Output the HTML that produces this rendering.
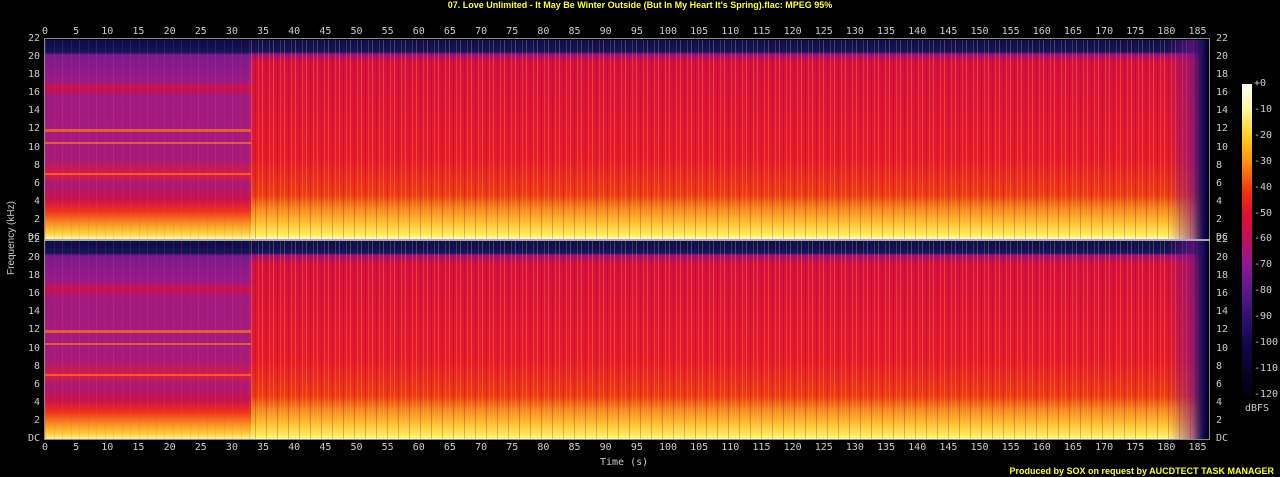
<!DOCTYPE html>
<html><head><style>
body{margin:0;width:1280px;height:477px;background:#000;overflow:hidden;position:relative;font-family:"DejaVu Sans Mono","Liberation Mono",monospace;color:#ccc;font-size:10px}
.t{position:absolute;white-space:nowrap}
.p{position:absolute;left:45px;width:1163px;height:199px;overflow:hidden}
.r{position:absolute;top:0;bottom:0;left:206px;right:0;background:linear-gradient(to bottom,#0c0c48 0,#141458 12px,#9a1080 14px,#d8103a 22px,#e81a28 60%,#f03a10 78%,#f8801a 84%,#ffc030 92%,#fff060 98%,#fffad0 100%)}
.l{position:absolute;top:0;bottom:0;left:0;width:206px;background:linear-gradient(to bottom,#0c0c48 0,#141458 12px,#7a1a8c 15px,#981a88 40px,#c01460 46px,#c8104a 50px,#a01a80 56px,#a81a7a 60%,#d81a40 68%,#a81a78 72%,#c81250 80%,#f0301c 86%,#f89020 92%,#ffd040 97%,#fff8a0 100%)}
.s{position:absolute;top:0;bottom:0;left:206px;right:0;background:repeating-linear-gradient(to right,rgba(255,200,120,.28) 0 1px,transparent 1px 4px,rgba(120,0,80,.25) 4px 5px,transparent 5px 7px,rgba(255,220,120,.2) 7px 8px,transparent 8px 11px)}
.s2{position:absolute;top:0;bottom:0;left:0;width:206px;background:repeating-linear-gradient(to right,rgba(255,80,120,.18) 0 1px,transparent 1px 9px,rgba(255,60,100,.15) 9px 10px,transparent 10px 17px)}
.e{position:absolute;top:0;bottom:0;right:0;width:40px;background:linear-gradient(to right,transparent,rgba(120,20,140,.6) 60%,#20105a 85%,#000030)}
.h{position:absolute;left:0;width:206px;height:3px;background:rgba(255,120,30,.7)}
</style></head><body>
<div class="t" style="left:0;width:1280px;top:0;text-align:center;color:#ffff30;font-family:'Liberation Sans',sans-serif;font-size:9px;font-weight:bold">07. Love Unlimited - It May Be Winter Outside (But In My Heart It's Spring).flac: MPEG 95%</div>
<div class="p" style="top:40px"><div class="l"></div><div class="s2"></div><div class="h" style="top:89px"></div><div class="h" style="top:102px;height:2px"></div><div class="h" style="top:133px;height:2px"></div><div class="r"></div><div class="s"></div><div class="e"></div></div>
<div class="p" style="top:241px"><div class="l"></div><div class="s2"></div><div class="h" style="top:89px"></div><div class="h" style="top:102px;height:2px"></div><div class="h" style="top:133px;height:2px"></div><div class="r"></div><div class="s"></div><div class="e"></div></div>
<div style="position:absolute;left:44px;top:38px;width:1166px;height:402px;border:1px solid #888;box-sizing:border-box"></div>
<div style="position:absolute;left:44px;top:239px;width:1166px;height:2px;background:#aaa"></div>
<div style="position:absolute;left:1242px;top:84px;width:10px;height:311px;background:linear-gradient(to bottom,#fff 0,#fff8a0 8%,#ffd020 17%,#ff9010 25%,#f03010 35%,#e01030 42%,#c01060 50%,#901890 58%,#601890 66%,#301070 75%,#10084a 84%,#000010 100%)"></div>
<div class="t" style="left:1245px;top:403px">dBFS</div>
<div class="t" style="left:600px;top:457px">Time (s)</div>
<div class="t" style="left:6px;top:275px;transform:rotate(-90deg);transform-origin:0 0;font-family:'Liberation Sans',sans-serif">Frequency (kHz)</div>
<div class="t" style="right:6px;top:466px;color:#ffff30;font-family:'Liberation Sans',sans-serif;font-size:9px;font-weight:bold">Produced by SOX on request by AUCDTECT TASK MANAGER</div>
<div id="a"></div>
<script>
var a=document.getElementById('a'),h='';
for(var s=0;s<=185;s+=5){var x=45+s*6.23;h+='<div class="t" style="left:'+(x-10)+'px;width:20px;text-align:center;top:26px">'+s+'</div><div class="t" style="left:'+(x-10)+'px;width:20px;text-align:center;top:442px">'+s+'</div>';}
[40,241].forEach(function(y0){for(var k=0;k<=22;k+=2){var y=y0+199-k*9.05;var lb=k==0?'DC':k;h+='<div class="t" style="left:20px;width:20px;text-align:right;top:'+(y-7)+'px">'+lb+'</div><div class="t" style="left:1216px;top:'+(y-7)+'px">'+lb+'</div>';}});
for(var d=0;d<=120;d+=10){h+='<div class="t" style="left:1254px;top:'+(84+d*2.59-6)+'px">'+(d==0?'+0':'-'+d)+'</div>';}
a.innerHTML=h;
</script>
</body></html>
